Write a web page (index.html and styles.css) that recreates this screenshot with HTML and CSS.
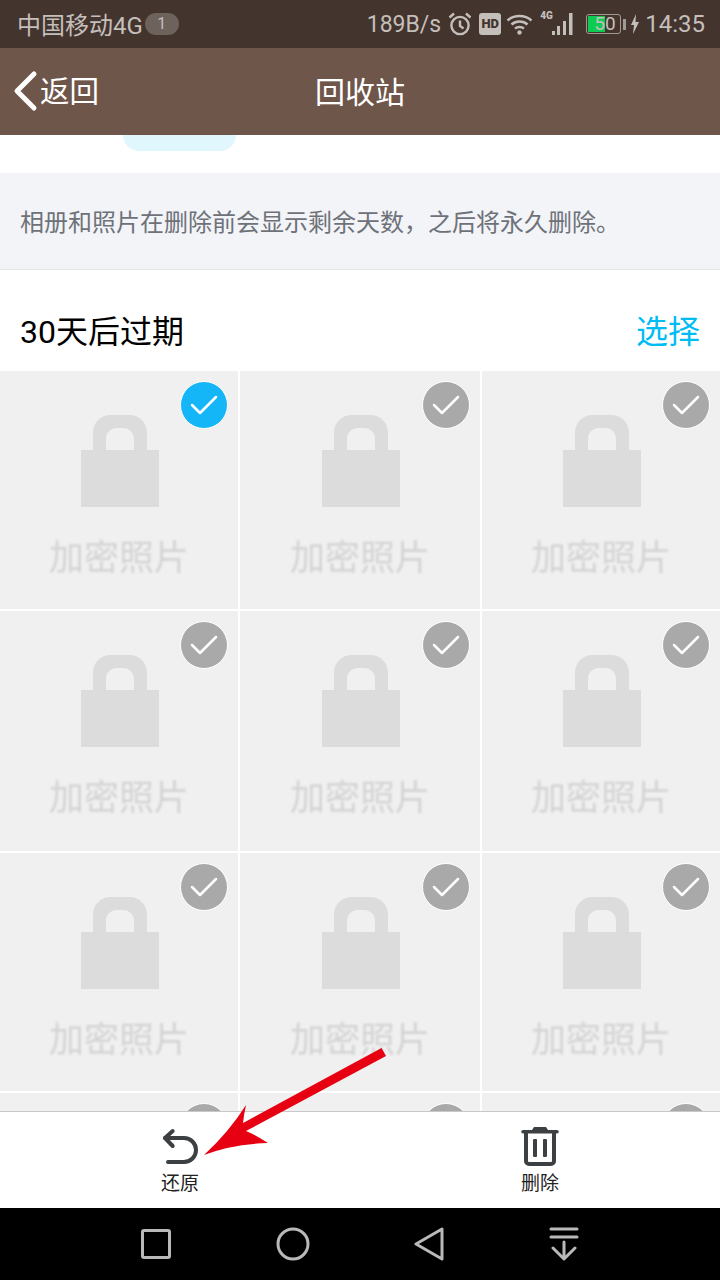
FILE: index.html
```html
<!DOCTYPE html>
<html lang="zh-CN">
<head>
  <meta charset="UTF-8" />
  <meta name="viewport" content="width=device-width, initial-scale=1.0"/>
  <title>回收站</title>
  <link rel="stylesheet" href="styles.css">
</head>
<body>
  <div class="status-bar">
    <div class="status-left">
      <span class="carrier">中国移动4G</span>
      <span class="sim-badge">1</span>
    </div>
    <div class="status-right">
      <span class="speed">189B/s</span>
      <svg class="alarm" width="24" height="24" viewBox="0 0 24 24" fill="none" stroke="#c4bfbb" stroke-width="2.4">
        <circle cx="12" cy="13.5" r="8.6"/>
        <path d="M12 8.5v5.5l3.5 2.5M1.5 5.5L6 1.5M22.5 5.5L18 1.5"/>
      </svg>
      <span class="hd">HD</span>
      <svg class="wifi" width="27" height="22" viewBox="0 0 27 22" fill="none" stroke="#c4bfbb" stroke-width="2.4">
        <path d="M1.5 7.5C8 1.5 19 1.5 25.5 7.5M5.5 11.5C10 7.5 17 7.5 21.5 11.5M9 15.5C11.5 13.5 15.5 13.5 18 15.5"/>
        <circle cx="13.5" cy="19.5" r="2.2" fill="#c4bfbb" stroke="none"/>
      </svg>
      <span class="signal">
        <span class="net-type">4G</span>
        <svg width="24" height="24" viewBox="0 0 24 24" fill="#c4bfbb">
          <rect x="0" y="19" width="3" height="4"/>
          <rect x="5" y="14" width="3" height="9"/>
          <rect x="11" y="9" width="3" height="14"/>
          <rect x="17" y="1" width="3.5" height="22"/>
        </svg>
      </span>
      <span class="battery"><span class="battery-fill"></span><span class="battery-num">50</span></span>
      <span class="battery-nub"></span>
      <svg class="bolt" width="8" height="20" viewBox="0 0 8 20" fill="#c4bfbb">
        <path d="M5 0L0 11h3l-1 9 6-12H4.500z"/>
      </svg>
      <span class="clock">14:35</span>
    </div>
  </div>

  <div class="nav-bar">
    <div class="nav-back">
      <svg width="26" height="42" viewBox="0 0 26 42" fill="none" stroke="#fff" stroke-width="5" stroke-linecap="round" stroke-linejoin="round">
        <path d="M21 4L4 21l17 17"/>
      </svg>
      <span class="nav-back-text">返回</span>
    </div>
    <div class="nav-title">回收站</div>
  </div>

  <div class="content">
    <div class="top-strip"><div class="strip-pill"></div></div>
    <div class="notice">相册和照片在删除前会显示剩余天数，之后将永久删除。</div>
    <div class="section-head">
      <span class="section-title">30天后过期</span>
      <span class="section-action">选择</span>
    </div>
    <div class="photo-grid" id="photoGrid"></div>
  </div>

  <div class="toolbar">
    <div class="tool">
      <svg width="38" height="40" viewBox="0 0 38 40" fill="none" stroke="#3c4043" stroke-width="4" stroke-linecap="round" stroke-linejoin="round">
        <path d="M11.700 5L4 12l7.700 8"/>
        <path d="M4 12h19a12 12 0 0 1 0 24H7"/>
      </svg>
      <span class="tool-label">还原</span>
    </div>
    <div class="tool">
      <svg width="38" height="40" viewBox="0 0 38 40" fill="#3c4043">
        <path d="M13 1h12l2 3h9a1.500 1.500 0 0 1 0 3.500H2A1.500 1.500 0 0 1 2 4h9z"/>
        <path d="M5 6v29a3 3 0 0 0 3 3h22a3 3 0 0 0 3-3V6" fill="none" stroke="#3c4043" stroke-width="4"/>
        <rect x="12" y="13" width="4" height="18" rx="1"/>
        <rect x="22" y="13" width="4" height="18" rx="1"/>
      </svg>
      <span class="tool-label">删除</span>
    </div>
  </div>

  <div class="sys-nav">
    <svg width="30" height="30" viewBox="0 0 30 30" fill="none" stroke="#b9b9b9" stroke-width="3" stroke-linejoin="round"><rect x="1.500" y="1.500" width="27" height="27" rx="1.500"/></svg>
    <svg width="34" height="34" viewBox="0 0 34 34" fill="none" stroke="#b9b9b9" stroke-width="3"><circle cx="17" cy="17" r="15"/></svg>
    <svg width="30" height="34" viewBox="0 0 30 34" fill="none" stroke="#b9b9b9" stroke-width="3" stroke-linejoin="round"><path d="M28 2v30L2 17z"/></svg>
    <svg width="30" height="34" viewBox="0 0 30 34" fill="none" stroke="#b9b9b9" stroke-width="3" stroke-linecap="round" stroke-linejoin="round"><path d="M2 2h26M2 10h26M15 15v17M4 21l11 11 11-11"/></svg>
  </div>

  <!-- red annotation arrow on top of the screenshot -->
  <svg class="arrow" width="720" height="1280" viewBox="0 0 720 1280">
    <path d="M381.500 1048L386 1056L246 1131Q254 1134 268 1143Q232 1144 204 1155Q229 1132 246 1105Q244 1114 243 1123z" fill="#e60012"/>
  </svg>

  <script>
    const grid = document.getElementById("photoGrid");
    const lock = `
        <svg class="lock" width="78" height="92" viewBox="0 0 78 92" fill="#dcdcdc">
          <path d="M12 36V18C12 7 20 0 30 0h18c10 0 18 7 18 18v18H53V24c0-7-5-11-11-11h-6c-6 0-11 4-11 11v12z"/>
          <rect x="0" y="35" width="78" height="57"/>
        </svg>
        <span class="lock-text">加密照片</span>`;
    // the last row is mostly hidden behind the toolbar, only the checks peek out
    for (let i = 0; i < 12; i++) {
      const cell = document.createElement("div");
      cell.className = "photo";
      cell.innerHTML = `
        <span class="check${i === 0 ? " on" : ""}">
          <svg width="30" height="30" viewBox="0 0 30 30" fill="none" stroke="#fff" stroke-width="2.500" stroke-linecap="round" stroke-linejoin="round"><path d="M3 15l8 8L27 7"/></svg>
        </span>${i < 9 ? lock : ""}`;
      grid.appendChild(cell);
    }
  </script>
</body>
</html>
```

FILE: styles.css
```css
* {
  box-sizing: border-box;
}

body {
  margin: 0;
  width: 720px;
  height: 1280px;
  overflow: hidden;
  position: relative;
  display: flex;
  flex-direction: column;
  background: #fff;
  font-family: Roboto, 'Noto Sans CJK SC', sans-serif;
}

.status-bar {
  height: 48px;
  flex: none;
  background: #43342e;
  color: #c4bfbb;
  font-size: 23px;
  display: flex;
  justify-content: space-between;
  align-items: center;
  padding: 0 15px 0 17px;
}

.status-left,
.status-right {
  display: flex;
  align-items: center;
}

.status-left {
  font-size: 24px;
}

.carrier {
  margin-top: -1px;
}

.sim-badge {
  width: 34px;
  height: 22px;
  margin-left: 2px;
  border-radius: 11px;
  background: #6e625d;
  font-size: 16px;
  line-height: 22px;
  text-align: center;
}

.alarm {
  margin-left: 7px;
}

.hd {
  width: 22px;
  height: 22px;
  margin-left: 7px;
  border-radius: 3px;
  background: #c4bfbb;
  color: #43342e;
  font-size: 13px;
  font-weight: 900;
  line-height: 22px;
  text-align: center;
}

.wifi {
  margin-left: 5px;
}

.signal {
  position: relative;
  width: 36px;
  height: 24px;
  margin-left: 7px;
  display: flex;
  justify-content: flex-end;
}

.net-type {
  position: absolute;
  left: 0;
  top: -2px;
  font-size: 10px;
  font-weight: 900;
}

.battery {
  position: relative;
  width: 35px;
  height: 20px;
  margin-left: 10px;
  border: 1.500px solid #a09a96;
  border-radius: 3px;
  display: block;
}

.battery-fill {
  position: absolute;
  left: 1px;
  top: 1px;
  bottom: 1px;
  width: 17px;
  background: #0ecb52;
}

.battery-num {
  position: absolute;
  left: 7px;
  top: -3px;
  font-size: 19px;
  line-height: 23px;
}

.battery-nub {
  width: 3px;
  height: 11px;
  margin-left: 2px;
  background: #a09a96;
}

.bolt {
  margin-left: 5px;
}

.clock {
  margin-left: 6px;
  font-size: 24px;
}

.nav-bar {
  height: 87px;
  flex: none;
  position: relative;
  background: #6f564b;
  color: #fff;
  font-size: 30px;
  display: flex;
  align-items: center;
  justify-content: center;
}

.nav-title {
  margin-bottom: 4px;
}

.nav-back {
  position: absolute;
  left: 13px;
  top: 22px;
  display: flex;
  align-items: center;
  gap: 1px;
}

.nav-back-text {
  font-size: 29.500px;
  margin-top: -4px;
}

.content {
  flex: 1;
  min-height: 0;
  overflow: hidden;
}

.top-strip {
  height: 38px;
  background: #fff;
}

.strip-pill {
  width: 113px;
  height: 16px;
  margin-left: 123px;
  border-radius: 0 0 28px 28px;
  background: #e0f8fd;
}

.notice {
  height: 97px;
  padding-left: 20px;
  background: #f2f4f8;
  border-bottom: 1px solid #e4e4e4;
  color: #6e7278;
  font-size: 24px;
  line-height: 100px;
}

.section-head {
  height: 101px;
  padding: 17px 20px 0;
  display: flex;
  justify-content: space-between;
  align-items: center;
}

.section-title {
  font-size: 32px;
  color: #000;
}

.section-action {
  font-size: 32px;
  color: #00bcf5;
}

.photo-grid {
  display: grid;
  grid-template-columns: 238px 240px 238px;
  grid-template-rows: 238px 240px 238px 238px;
  gap: 2px;
}

.photo {
  position: relative;
  background: #f0f0f0;
  display: flex;
  flex-direction: column;
  align-items: center;
  padding-top: 44px;
}

.lock {
  margin-left: 2px;
}

.lock-text {
  margin-top: 29px;
  color: #d3d3d3;
  font-size: 35px;
  line-height: 46px;
  filter: blur(1px);
}

.check {
  position: absolute;
  top: 10px;
  right: 10px;
  width: 48px;
  height: 48px;
  border: 1.500px solid #fff;
  border-radius: 50%;
  background: #a9a9a9;
  display: flex;
  align-items: center;
  justify-content: center;
}

.check.on {
  background: #14b6f7;
}

.toolbar {
  height: 97px;
  flex: none;
  border-top: 1px solid #c8c8c8;
  background: #fff;
  display: flex;
}

.tool {
  flex: 1;
  display: flex;
  flex-direction: column;
  align-items: center;
  padding-top: 14px;
  color: #222;
  font-size: 19px;
  line-height: 26px;
}

.tool-label {
  margin-top: 5px;
}

.sys-nav {
  height: 72px;
  flex: none;
  background: #000;
  display: flex;
  align-items: center;
  padding-left: 141px;
  gap: 104.5px;
}

.arrow {
  position: absolute;
  left: 0;
  top: 0;
  pointer-events: none;
}
```
